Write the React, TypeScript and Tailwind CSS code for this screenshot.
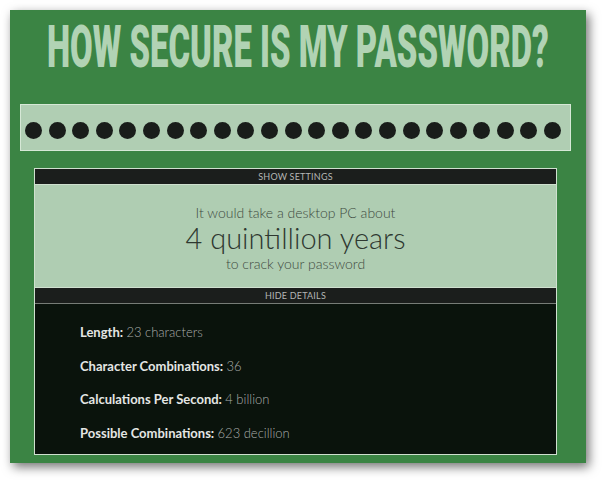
import React from 'react';

const details = [
  { label: 'Length:', value: '23 characters' },
  { label: 'Character Combinations:', value: '36' },
  { label: 'Calculations Per Second:', value: '4 billion' },
  { label: 'Possible Combinations:', value: '623 decillion' },
];

const lato = { fontFamily: 'Lato, "Open Sans", sans-serif' };

export default function App() {
  const dots = Array.from({ length: 23 });
  return (
    <div className="h-[480px] w-[602px] bg-white pl-[10px] pt-[10px]" style={lato}>
      <div className="flex h-[453px] w-[576px] flex-col bg-[#3b8444] shadow-[3px_4px_10px_rgba(0,0,0,0.55)]">
        {/* title */}
        <div className="flex h-[94px] justify-center overflow-hidden">
          <h1
            className="mt-[1px] inline-block origin-top scale-x-[0.548] whitespace-nowrap text-[60px] leading-[72px] font-black text-[#b1d3b4]"
            style={{ fontFamily: 'Roboto, "DejaVu Sans", sans-serif' }}
          >
            HOW SECURE IS MY PASSWORD?
          </h1>
        </div>

        {/* password field */}
        <div className="ml-[10px] flex h-[47px] w-[551px] items-center gap-[6.6px] border border-[#d6e8d6] bg-[#b0ceb3] pl-[4px] pt-[5px]">
          {dots.map((_, i) => (
            <span key={i} className="h-[17px] w-[17px] shrink-0 rounded-full bg-[#191d1a]" />
          ))}
        </div>

        {/* result panel */}
        <div className="ml-[24px] mt-[17px] flex w-[523px] flex-col border border-[#cfe0cf]">
          <div className="flex h-[16px] items-center justify-center border-b border-[#cfe0cf] bg-[#1b1e1c] text-[9px] uppercase tracking-[0.2px] text-[#b4b6b4]">
            Show Settings
          </div>
          <div className="flex h-[102px] flex-col items-center justify-center bg-[#afcdb2] pt-[4px] font-light text-[#3e4a40]">
            <div className="text-[14px] leading-[17px]">It would take a desktop PC about</div>
            <div className="text-[29px] leading-[34px] text-[#2e3830]">4 quintillion years</div>
            <div className="text-[14px] leading-[17px]">to crack your password</div>
          </div>
          <div className="flex h-[17px] items-center justify-center border-t border-b border-t-[#cfe0cf] border-b-[#777c77] bg-[#1b1e1c] text-[9px] uppercase tracking-[0.2px] text-[#b4b6b4]">
            Hide Details
          </div>
          <div className="flex h-[150px] flex-col gap-[18.5px] bg-[#0a130c] pl-[45px] pt-[21px]">
            {details.map((d) => (
              <div key={d.label} className="text-[13px] leading-[15px]">
                <span className="font-bold text-[#e4e6e4]">{d.label}</span>{' '}
                <span className="font-light text-[#a9aca9]">{d.value}</span>
              </div>
            ))}
          </div>
        </div>
      </div>
    </div>
  );
}
